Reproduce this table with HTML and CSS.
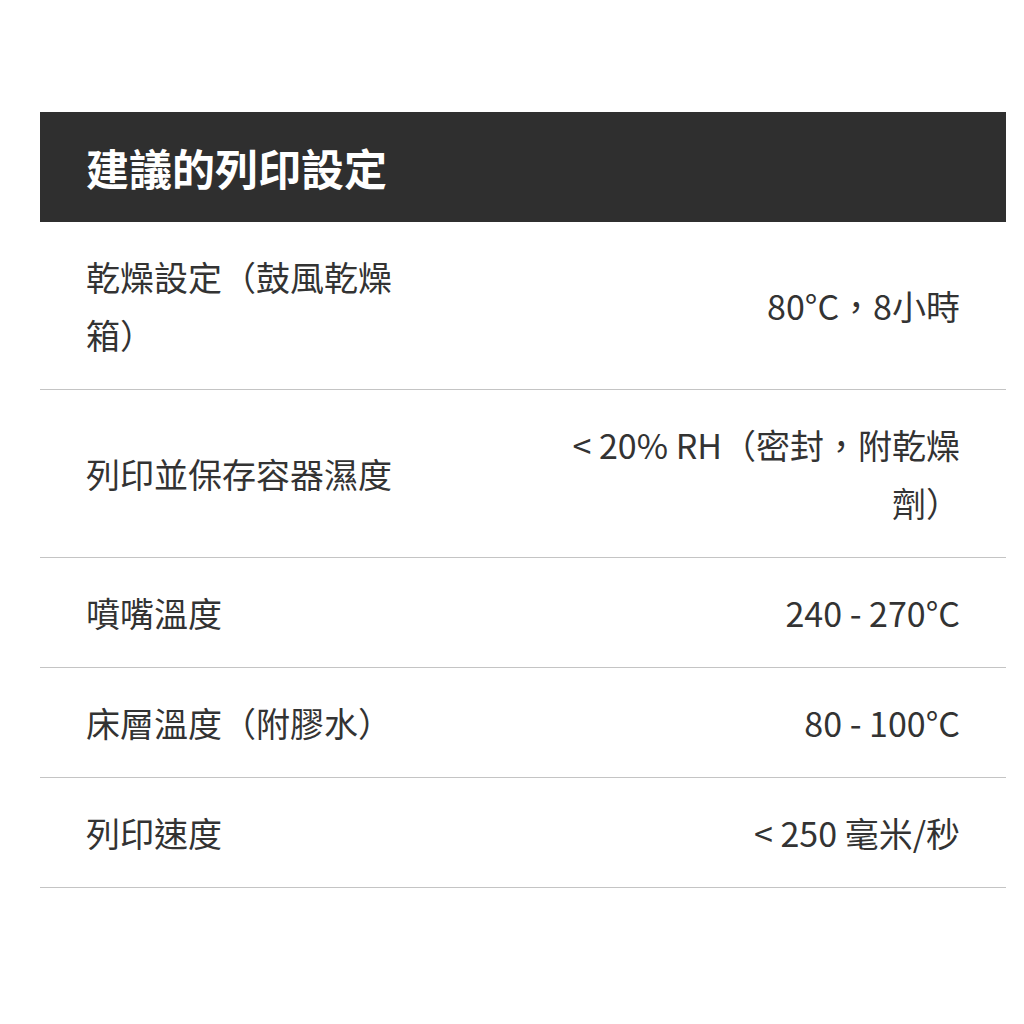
FILE: index.html
```html
<!DOCTYPE html>
<html lang="zh-Hant">
<head>
<meta charset="utf-8">
<title>建議的列印設定</title>
<link rel="stylesheet" href="styles.css">
</head>
<body>
<section class="specs">
  <h2 class="specs-title">建議的列印設定</h2>
  <div class="spec-row">
    <div class="spec-label">乾燥設定（鼓風乾燥箱）</div>
    <div class="spec-value">80°C，8小時</div>
  </div>
  <div class="spec-row">
    <div class="spec-label">列印並保存容器濕度</div>
    <div class="spec-value">&lt; 20% RH（密封，附乾燥劑）</div>
  </div>
  <div class="spec-row">
    <div class="spec-label">噴嘴溫度</div>
    <div class="spec-value">240 - 270°C</div>
  </div>
  <div class="spec-row">
    <div class="spec-label">床層溫度（附膠水）</div>
    <div class="spec-value">80 - 100°C</div>
  </div>
  <div class="spec-row">
    <div class="spec-label">列印速度</div>
    <div class="spec-value">&lt; 250 毫米/秒</div>
  </div>
</section>
</body>
</html>
```
FILE: styles.css
```css
html, body {
  margin: 0;
  padding: 0;
  background: #ffffff;
}
body {
  font-family: "Noto Sans CJK TC", "Noto Sans", sans-serif;
  color: #333333;
}
.specs {
  width: 966px;
  margin: 112px 0 0 40px;
}
.specs-title {
  margin: 0;
  height: 110px;
  box-sizing: border-box;
  background: #2f2f2f;
  color: #ffffff;
  font-size: 43px;
  font-weight: 700;
  line-height: 110px;
  padding: 0 46px;
}
.spec-row {
  display: grid;
  grid-template-columns: 330px 1fr;
  align-items: center;
  padding: 26px 46px 25px;
  border-bottom: 1px solid #c4c4c4;
  font-size: 34px;
  line-height: 58px;
}
.spec-value {
  justify-self: end;
  max-width: 410px;
  text-align: right;
}
```
